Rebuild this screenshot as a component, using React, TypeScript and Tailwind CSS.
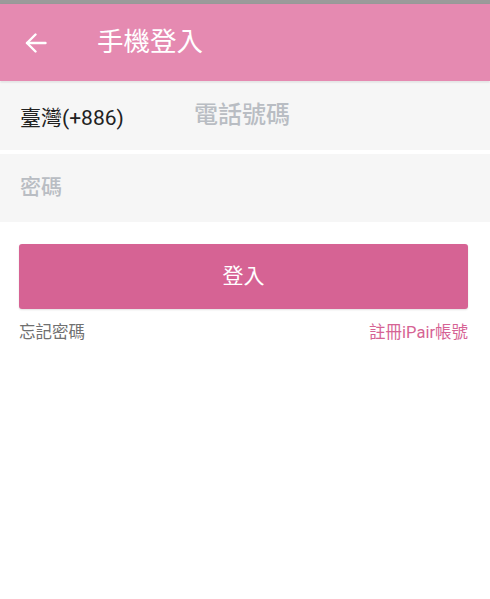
import React, { useState } from 'react';

const FONT = 'Roboto, "Noto Sans CJK TC", sans-serif';

const App: React.FC = () => {
  const [phone, setPhone] = useState('');
  const [password, setPassword] = useState('');

  return (
    <div className="min-h-[599px] bg-white" style={{ fontFamily: FONT }}>
      {/* status bar strip */}
      <div className="h-[4px] bg-[#9a9a9a]" />

      {/* header */}
      <div className="relative z-10 flex h-[77px] items-center bg-[#e58ab1] shadow-[0_1px_2px_rgba(0,0,0,0.15)]">
        <button className="ml-[25px] flex h-[22px] w-[22px] items-center justify-center text-white">
          <svg width="22" height="20" viewBox="0 0 22 20" fill="none" stroke="currentColor" strokeWidth="2.4" strokeLinecap="round" strokeLinejoin="round">
            <path d="M20.5 10H2" />
            <path d="M10.5 1.5L2 10l8.5 8.5" />
          </svg>
        </button>
        <h1 className="ml-[50px] text-[26.5px] leading-none text-white">手機登入</h1>
      </div>

      {/* phone row */}
      <div className="mt-[1px] flex h-[68px] items-center bg-[#f6f6f6] pl-[20px]">
        <span className="w-[174px] shrink-0 pt-[5px] text-[21px] text-[#222]">臺灣(+886)</span>
        <input
          value={phone}
          onChange={(e) => setPhone(e.target.value)}
          placeholder="電話號碼"
          className="w-full bg-transparent pb-[2px] text-[24px] font-medium text-[#333] outline-none placeholder:text-[#b9bdc3]"
        />
      </div>

      {/* password row */}
      <div className="mt-[4px] flex h-[68px] items-center bg-[#f6f6f6] pl-[20px]">
        <input
          type="password"
          value={password}
          onChange={(e) => setPassword(e.target.value)}
          placeholder="密碼"
          className="w-full bg-transparent text-[21px] font-medium text-[#333] outline-none placeholder:text-[#b9bdc3]"
        />
      </div>

      {/* login button */}
      <div className="pl-[19px] pr-[22px] pt-[22px]">
        <button className="flex h-[65px] w-full items-center justify-center rounded-[3px] bg-[#d66394] text-[21px] text-white shadow-[0_1px_2px_rgba(0,0,0,0.12)]">
          登入
        </button>
        <div className="mt-[12px] flex items-center justify-between text-[16.5px]">
          <span className="text-[#707070]">忘記密碼</span>
          <span className="text-[#d66394]">註冊iPair帳號</span>
        </div>
      </div>
    </div>
  );
};

export default App;
